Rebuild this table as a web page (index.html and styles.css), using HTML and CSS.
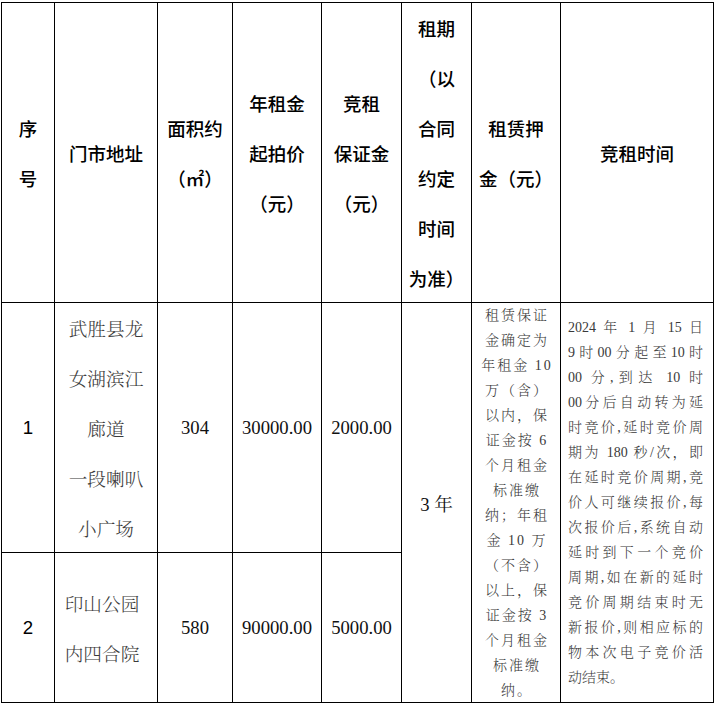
FILE: index.html
```html
<!DOCTYPE html>
<html lang="zh-CN">
<head>
<meta charset="utf-8">
<title>门市竞租</title>
<link rel="stylesheet" href="styles.css">
</head>
<body>
<div class="sheet">
  <div class="cell hd">序<br>号</div>
  <div class="cell hd">门市地址</div>
  <div class="cell hd">面积约<br>（㎡）</div>
  <div class="cell hd">年租金<br>起拍价<br>（元）</div>
  <div class="cell hd">竞租<br>保证金<br>（元）</div>
  <div class="cell hd">租期<br>（以<br>合同<br>约定<br>时间<br>为准）</div>
  <div class="cell hd">租赁押<br>金（元）</div>
  <div class="cell hd">竞租时间</div>

  <div class="cell idx">1</div>
  <div class="cell addr">武胜县龙<br>女湖滨江<br>廊道<br>一段喇叭<br>小广场</div>
  <div class="cell num">304</div>
  <div class="cell num">30000.00</div>
  <div class="cell num">2000.00</div>
  <div class="cell num tall">3 年</div>
  <div class="cell small tall">租赁保证<br>金确定为<br>年租金 10<br>万（含）<br>以内，保<br>证金按 6<br>个月租金<br>标准缴<br>纳；年租<br>金 10 万<br>（不含）<br>以上，保<br>证金按 3<br>个月租金<br>标准缴<br>纳。</div>
  <div class="cell time tall">
    <div class="time-text">
      <span class="ln">2024 年 1 月 15 日</span>
      <span class="ln">9时00分起至10时</span>
      <span class="ln">00 分,到达 10 时</span>
      <span class="ln">00分后自动转为延</span>
      <span class="ln">时竞价,延时竞价周</span>
      <span class="ln">期为 180 秒/次，即</span>
      <span class="ln">在延时竞价周期,竞</span>
      <span class="ln">价人可继续报价,每</span>
      <span class="ln">次报价后,系统自动</span>
      <span class="ln">延时到下一个竞价</span>
      <span class="ln">周期,如在新的延时</span>
      <span class="ln">竞价周期结束时无</span>
      <span class="ln">新报价,则相应标的</span>
      <span class="ln">物本次电子竞价活</span>
      <span class="ln last">动结束。</span>
    </div>
  </div>

  <div class="cell idx">2</div>
  <div class="cell addr addr-2">印山公园<br>内四合院</div>
  <div class="cell num">580</div>
  <div class="cell num">90000.00</div>
  <div class="cell num">5000.00</div>
</div>
</body>
</html>
```

FILE: styles.css
```css
html, body {
  margin: 0;
  padding: 0;
  background: #fff;
}

.sheet {
  margin: 2px 0 0 1px;
  width: 713px;
  box-sizing: border-box;
  display: grid;
  grid-template-columns: 52px 102px 74px 88px 79px 69px 88px 152px;
  grid-template-rows: 299px 249px 149px;
  gap: 1px;
  padding: 1px;
  background: #000;
}

.cell {
  background: #fff;
  display: flex;
  align-items: center;
  justify-content: center;
  text-align: center;
  min-width: 0;
  min-height: 0;
}

.hd {
  font-family: "Noto Sans CJK SC", "Noto Sans", sans-serif;
  font-size: 18.5px;
  font-weight: 500;
  line-height: 50px;
  color: #000;
}

.idx {
  font-family: "Liberation Sans", "Noto Sans", sans-serif;
  font-size: 18.67px;
  color: #000;
}

.addr {
  font-family: "Noto Serif CJK SC", "Noto Sans CJK SC", serif;
  font-size: 18.67px;
  font-weight: 300;
  line-height: 50px;
  color: #3a3a3a;
}

.addr-2 {
  padding-right: 8px;
}

.num {
  font-family: "Liberation Serif", "Noto Serif CJK SC", "Noto Sans CJK SC", serif;
  font-size: 18.67px;
  color: #111;
}

.tall {
  grid-row: span 2;
}

.small {
  font-family: "Liberation Serif", "Noto Serif CJK SC", "Noto Sans CJK SC", serif;
  font-size: 14px;
  font-weight: 300;
  line-height: 25px;
  letter-spacing: 2px;
  color: #3a3a3a;
  padding-left: 2px;
}

.time {
  justify-content: flex-start;
  padding: 0 10px 0 7px;
  font-family: "Liberation Serif", "Noto Serif CJK SC", "Noto Sans CJK SC", serif;
  font-size: 14px;
  font-weight: 300;
  line-height: 25px;
  color: #3a3a3a;
}

.time-text {
  width: 100%;
}

.ln {
  display: block;
  white-space: nowrap;
  text-align: justify;
  text-align-last: justify;
}

.ln.last {
  text-align-last: left;
}
```
